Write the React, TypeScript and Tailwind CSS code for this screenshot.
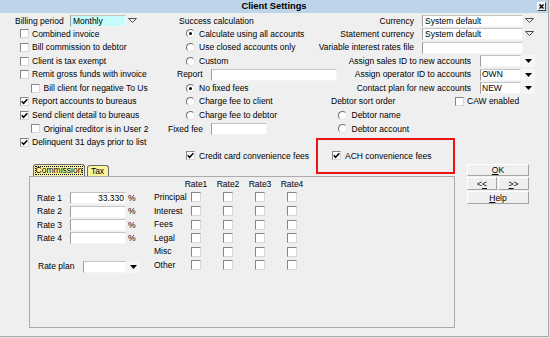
import React, { Fragment } from "react";

const F = "font-['Liberation_Sans',Arial,sans-serif]";

function Check({ on, big }: { on?: boolean; big?: boolean }) {
  return (
    <span
      className={`${big ? "w-[10px] h-[10px]" : "w-[9px] h-[9px]"} shrink-0 flex items-center justify-center bg-white border border-t-[#858585] border-l-[#858585] border-r-[#d8d8d8] border-b-[#d8d8d8]`}
    >
      {on && (
        <svg width="7" height="7" viewBox="0 0 7 7">
          <polyline points="0.7,3.3 2.6,5.3 6.3,1.2" fill="none" stroke="#000" strokeWidth="1.5" />
        </svg>
      )}
    </span>
  );
}

function Radio({ on }: { on?: boolean }) {
  return (
    <span className="w-[9px] h-[9px] shrink-0 rounded-full flex items-center justify-center bg-white border border-t-[#6e6e6e] border-l-[#6e6e6e] border-r-[#e4e4e4] border-b-[#e4e4e4]">
      {on && <span className="w-[3px] h-[3px] rounded-full bg-black" />}
    </span>
  );
}

function ArrowBtn({ filled }: { filled?: boolean }) {
  return filled ? (
    <span className="w-[14px] h-[12px] shrink-0 flex items-center justify-center bg-[#f6f6f6]">
      <svg width="7" height="4" viewBox="0 0 7 4">
        <polygon points="0,0 7,0 3.5,4" fill="#000" />
      </svg>
    </span>
  ) : (
    <span className="w-[13px] h-[12px] shrink-0 flex items-center justify-center">
      <svg width="9" height="5" viewBox="0 0 9 5">
        <polygon points="0.5,0.5 8.5,0.5 4.5,4.5" fill="none" stroke="#4a4a4a" strokeWidth="1" />
      </svg>
    </span>
  );
}

const FIELD =
  "h-[12px] shrink-0 flex items-center border border-t-[#c4c4c4] border-l-[#9c9c9c] border-r-[#f4f4f4] border-b-[#f4f4f4]";

function Row({
  first,
  l,
  m,
  r,
}: {
  first?: boolean;
  l?: React.ReactNode;
  m?: React.ReactNode;
  r?: React.ReactNode;
}) {
  return (
    <div className={`${first ? "h-[14.2px] pt-[1.4px]" : "h-[13.55px]"} flex shrink-0`}>
      <div className="w-[165px] shrink-0 flex items-center">{l}</div>
      <div className="w-[150px] shrink-0 flex items-center">{m}</div>
      <div className="flex-1 flex items-center relative">{r}</div>
    </div>
  );
}

function LChk({ on, indent, children }: { on?: boolean; indent?: boolean; children: React.ReactNode }) {
  return (
    <span className={`flex items-center gap-[3.5px] ${indent ? "pl-[31px]" : "pl-[19.5px]"}`}>
      <Check on={on} />
      <span>{children}</span>
    </span>
  );
}

function MRad({ on, children }: { on?: boolean; children: React.ReactNode }) {
  return (
    <span className="flex items-center gap-[4px] pl-[21px]">
      <Radio on={on} />
      <span>{children}</span>
    </span>
  );
}

function RSel({ label, value, noArrow }: { label: string; value?: string; noArrow?: boolean }) {
  return (
    <>
      <span className="w-[99px] text-right shrink-0">{label}</span>
      <span className={`${FIELD} ml-[8px] w-[101px] bg-white pl-[2px]`}>{value}</span>
      {!noArrow && <ArrowBtn />}
    </>
  );
}

function RSmall({ label, value }: { label: string; value?: string }) {
  return (
    <>
      <span className="w-[156px] text-right shrink-0">{label}</span>
      <span className={`${FIELD} ml-[9px] w-[41px] bg-white pl-[1px]`}>{value}</span>
      <ArrowBtn filled />
    </>
  );
}

function Btn({ className, children }: { className: string; children: React.ReactNode }) {
  return (
    <div
      className={`${className} shrink-0 flex items-center justify-center bg-[#efefef] border border-t-white border-l-white border-r-[#a3a3a3] border-b-[#a3a3a3]`}
    >
      {children}
    </div>
  );
}

export default function App() {
  const labels = ["Principal", "Interest", "Fees", "Legal", "Misc", "Other"];
  return (
    <div className={`w-[550px] h-[338px] bg-[#e4e4e4] ${F} text-[8.5px] text-black leading-none whitespace-nowrap`}>
      <div className="w-[549px] h-[337px] bg-[#efefef] border-r border-b border-[#a9a9a9] flex flex-col overflow-hidden">
        {/* Title bar */}
        <div className="h-[13px] shrink-0 bg-[#bed4ea] grid grid-cols-[1fr_auto_1fr] items-center">
          <span />
          <span className="font-bold text-[9.3px]">Client Settings</span>
          <span className="flex justify-end pr-[2px]">
            <span className="w-[9px] h-[9px] flex items-center justify-center bg-[#ebebeb] border border-t-white border-l-white border-r-[#404040] border-b-[#404040]">
              <svg width="5" height="5" viewBox="0 0 5 5">
                <path d="M0.5 0.5 L4.5 4.5 M4.5 0.5 L0.5 4.5" stroke="#000" strokeWidth="1.4" />
              </svg>
            </span>
          </span>
        </div>

        {/* Upper form */}
        <Row
          first
          l={
            <span className="flex items-center pl-[15px]">
              <span className="w-[55px] shrink-0">Billing period</span>
              <span className={`${FIELD} w-[56px] bg-[#c6fbfc] pl-[2px]`}>Monthly</span>
              <ArrowBtn />
            </span>
          }
          m={<span className="pl-[14px]">Success calculation</span>}
          r={<RSel label="Currency" value="System default" />}
        />
        <Row
          l={<LChk>Combined invoice</LChk>}
          m={<MRad on>Calculate using all accounts</MRad>}
          r={<RSel label="Statement currency" value="System default" />}
        />
        <Row
          l={<LChk>Bill commission to debtor</LChk>}
          m={<MRad>Use closed accounts only</MRad>}
          r={<RSel label="Variable interest rates file" noArrow />}
        />
        <Row
          l={<LChk>Client is tax exempt</LChk>}
          m={<MRad>Custom</MRad>}
          r={<RSmall label="Assign sales ID to new accounts" />}
        />
        <Row
          l={<LChk>Remit gross funds with invoice</LChk>}
          m={
            <span className="flex items-center pl-[12px]">
              <span className="w-[34px] shrink-0">Report</span>
              <span className={`${FIELD} w-[126px] bg-white`} />
            </span>
          }
          r={<RSmall label="Assign operator ID to accounts" value="OWN" />}
        />
        <Row
          l={<LChk indent>Bill client for negative To Us</LChk>}
          m={<MRad on>No fixed fees</MRad>}
          r={<RSmall label="Contact plan for new accounts" value="NEW" />}
        />
        <Row
          l={<LChk on>Report accounts to bureaus</LChk>}
          m={<MRad>Charge fee to client</MRad>}
          r={
            <span className="flex items-center pl-[16px]">
              <span className="w-[123.5px] shrink-0">Debtor sort order</span>
              <Check />
              <span className="ml-[3.5px]">CAW enabled</span>
            </span>
          }
        />
        <Row
          l={<LChk on>Send client detail to bureaus</LChk>}
          m={<MRad>Charge fee to debtor</MRad>}
          r={
            <span className="flex items-center gap-[4.5px] pl-[23px]">
              <Radio />
              <span>Debtor name</span>
            </span>
          }
        />
        <Row
          l={<LChk indent>Original creditor is in User 2</LChk>}
          m={
            <span className="flex items-center pl-[3px]">
              <span className="w-[43px] shrink-0">Fixed fee</span>
              <span className={`${FIELD} w-[56px] bg-white`} />
            </span>
          }
          r={
            <span className="flex items-center gap-[4.5px] pl-[23px]">
              <Radio />
              <span>Debtor account</span>
            </span>
          }
        />
        <Row l={<LChk on>Delinquent 31 days prior to list</LChk>} />
        <Row
          m={
            <span className="flex items-center gap-[4px] pl-[21px]">
              <Check on />
              <span>Credit card convenience fees</span>
            </span>
          }
          r={
            <>
              <span className="flex items-center gap-[4px] pl-[17px]">
                <Check on />
                <span>ACH convenience fees</span>
              </span>
              <span className="absolute left-[1px] top-[-11px] w-[139px] h-[36px] border-2 border-[#ee1111] pointer-events-none" />
            </>
          }
        />

        {/* Lower section */}
        <div className="flex mt-[1.3px] pl-[29px] shrink-0">
          <div className="w-[426px] shrink-0 flex flex-col">
            <div className="h-[12px] flex items-end pl-[4px]">
              <div className="h-[12px] w-[52px] bg-[#f9f59c] border border-b-0 border-[#6a6a6a] rounded-t-[3px] flex items-center justify-center">
                <span className="border border-dotted border-black h-[9.5px] flex items-center">Commission</span>
              </div>
              <div className="h-[11px] w-[22px] ml-[1.5px] bg-[#f9f59c] border border-b-0 border-[#6a6a6a] rounded-t-[3px] flex items-center justify-center">
                Tax
              </div>
            </div>
            <div className="h-[152px] border border-[#ababab] flex">
              <div className="w-[124px] shrink-0 pl-[7px] pt-[14.6px] flex flex-col">
                {["Rate 1", "Rate 2", "Rate 3", "Rate 4"].map((r, i) => (
                  <div key={r} className="h-[13.4px] flex items-center">
                    <span className="w-[33px] shrink-0">{r}</span>
                    <span className={`${FIELD} w-[56px] bg-white justify-end pr-[1px]`}>
                      {i === 0 ? "33.330" : ""}
                    </span>
                    <span className="ml-[2px]">%</span>
                  </div>
                ))}
                <div className="h-[14.8px]" />
                <div className="h-[13.4px] flex items-center">
                  <span className="w-[46px] shrink-0 pl-[1px]">Rate plan</span>
                  <span className={`${FIELD} w-[43px] bg-white`} />
                  <ArrowBtn filled />
                </div>
              </div>
              <div className="grid grid-cols-[26px_32px_32px_32px_32px] auto-rows-[13.6px] items-center content-start">
                <span />
                <span className="text-center">Rate1</span>
                <span className="text-center">Rate2</span>
                <span className="text-center">Rate3</span>
                <span className="text-center">Rate4</span>
                {labels.map((l) => (
                  <Fragment key={l}>
                    <span>{l}</span>
                    {[0, 1, 2, 3].map((j) => (
                      <span key={j} className="flex justify-center">
                        <Check big />
                      </span>
                    ))}
                  </Fragment>
                ))}
              </div>
            </div>
          </div>
          <div className="ml-[12px] w-[62px] flex flex-col">
            <Btn className="w-[62px] h-[12px]">
              <span>
                <span className="underline">O</span>K
              </span>
            </Btn>
            <div className="flex gap-[1px] mt-[1.3px]">
              <Btn className="w-[30px] h-[13px]">
                <span>
                  &lt;<span className="underline">&lt;</span>
                </span>
              </Btn>
              <Btn className="w-[31px] h-[13px]">
                <span>
                  <span className="underline">&gt;</span>&gt;
                </span>
              </Btn>
            </div>
            <Btn className="w-[62px] h-[13px] mt-[1px]">
              <span>
                <span className="underline">H</span>elp
              </span>
            </Btn>
          </div>
        </div>
      </div>
    </div>
  );
}
